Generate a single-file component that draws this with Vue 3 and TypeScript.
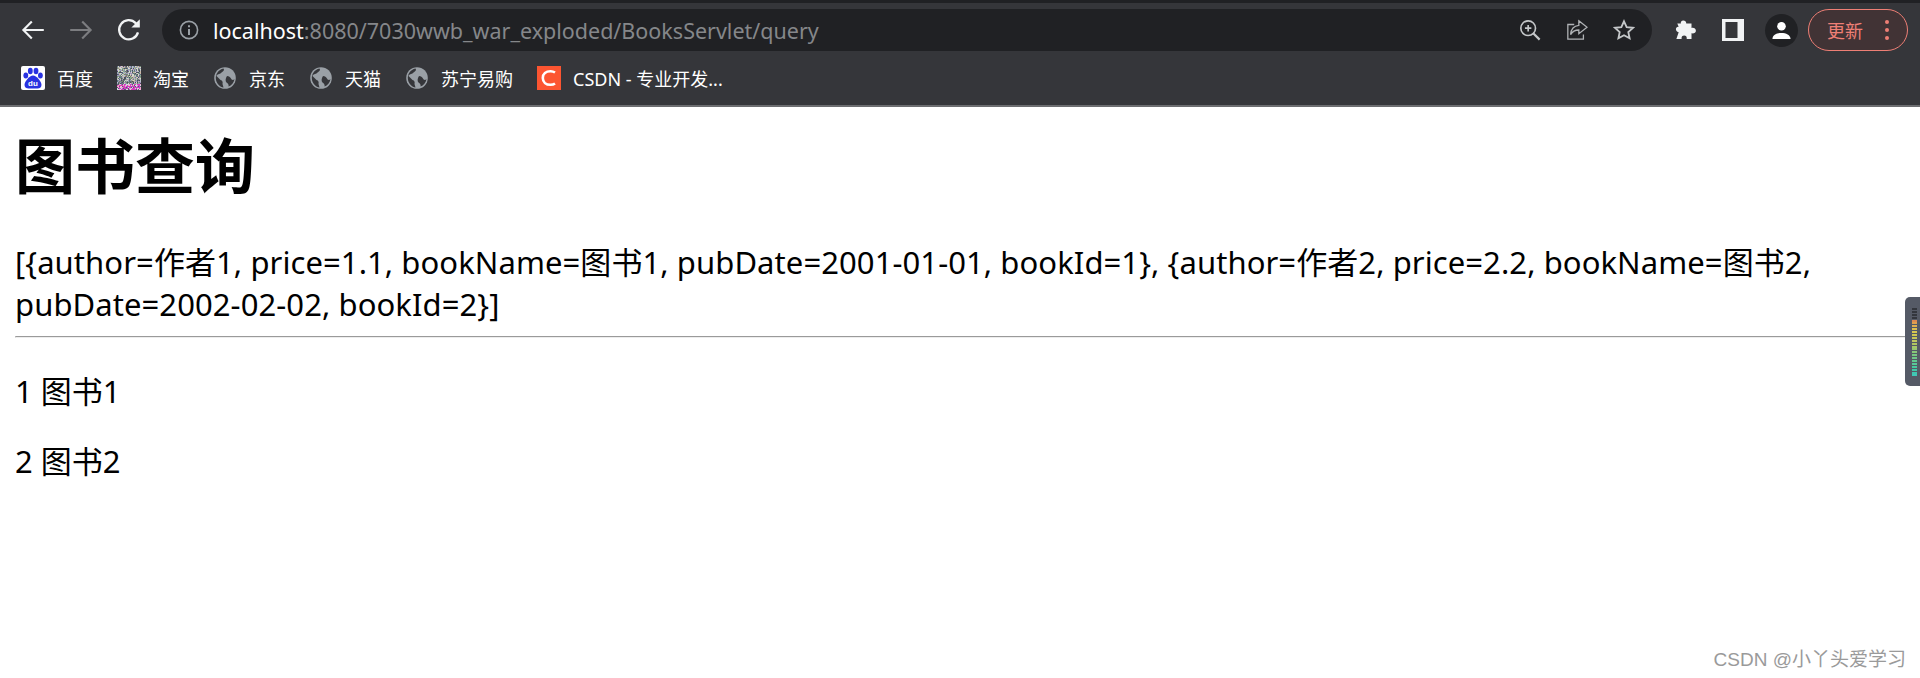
<script setup lang="ts">
const bookmarks = [
  { label: '百度', icon: 'baidu' },
  { label: '淘宝', icon: 'taobao' },
  { label: '京东', icon: 'globe' },
  { label: '天猫', icon: 'globe' },
  { label: '苏宁易购', icon: 'globe' },
  { label: 'CSDN - 专业开发...', icon: 'csdn' },
]
const palette = ['#9aa0b8', '#c9b7a8', '#6f8a7c', '#b8c0c8', '#5d6a80', '#d8d8c8', '#a890c0', '#88a890', '#7a7a70', '#4a5060']
const hot = ['#e040b0', '#c040d0', '#f0a0d0', '#5a6070', '#d8d8e0']
let seed = 17
const rnd = () => {
  seed = (seed * 1103 + 12345) % 65536
  return seed / 65536
}
const noise = Array.from({ length: 576 }, (_, i) => {
  const y = Math.floor(i / 24)
  const set = y > 17 ? hot : palette
  return { x: i % 24, y, fill: set[Math.floor(rnd() * set.length)] }
})
const meter = ['#e08a50', '#e0a050', '#e0b050', '#e0c050', '#d8c850', '#d0c850', '#c8c858', '#c0c860', '#b0c860', '#a8c868', '#98c870', '#88c878', '#78c880', '#70c888', '#60c890', '#58c898', '#48c8a0', '#40c8a8', '#40c8b0', '#40c8b8']
</script>

<template>
  <div class="page">
    <header class="chrome">
      <div class="tabstrip"></div>
      <div class="toolbar">
        <div class="nav">
          <svg class="nav-ic" viewBox="2 2 20 20" fill="none" stroke="#f1f3f4" stroke-width="1.8"><path d="M21 12H4M11 5l-7 7 7 7" /></svg>
          <svg class="nav-ic" viewBox="2 2 20 20" fill="none" stroke="#7c7d80" stroke-width="1.8"><path d="M3 12h17M13 5l7 7-7 7" /></svg>
          <svg class="nav-ic" viewBox="2 2 20 20" fill="none" stroke="#f1f3f4" stroke-width="1.9"><path d="M19.500 14a8 8 0 1 1-1.900-7.700L20 8.600" /><path d="M21 3v7h-7z" fill="#f1f3f4" stroke="none" /></svg>
        </div>
        <div class="omnibox">
          <svg class="info" viewBox="0 0 20 20" fill="none" stroke="#9aa0a6" stroke-width="1.600"><circle cx="10" cy="10" r="8.600" /><path d="M10 9v6M10 5.200v2" stroke-width="2" /></svg>
          <div class="url"><span class="host">localhost</span>:8080/7030wwb_war_exploded/BooksServlet/query</div>
          <div class="omni-actions">
            <svg class="ic" viewBox="0 0 24 24" fill="none" stroke="#c4c7c9" stroke-width="1.800"><circle cx="10" cy="10" r="8" /><path d="M15.500 15.500l7 7" stroke-width="2.400" /><path d="M10 6.500v7M6.500 10h7" /></svg>
            <svg class="ic" viewBox="0 0 24 24" fill="none" stroke="#b0b3b6" stroke-width="1.400"><path d="M9 6H2v16h17v-5" /><path d="M14 2l9 7-9 7v-4c-4 0-7 1.500-9 5 .5-6 3.500-9.500 9-10z" /></svg>
            <svg class="ic" viewBox="0 0 24 24" fill="none" stroke="#c4c7c9" stroke-width="2"><path d="M12 2.500l2.900 6.300 6.900.8-5.100 4.700 1.400 6.800-6.100-3.400-6.100 3.400 1.400-6.800-5.100-4.700 6.900-.8z" /></svg>
          </div>
        </div>
        <div class="tools">
          <svg class="ic puzzle" viewBox="0 0 24 24" fill="#f1f3f4"><path d="M9 1.500c2 0 3.300 1.400 3.300 3.300h5.700v5c2.500-.6 4.800.7 4.800 2.900s-2.300 3.400-4.800 2.900v6.100h-5.200c.4-2.300-1-3.600-2.800-3.600s-3.200 1.300-2.800 3.600H1.500l2.500-7.200C1.800 14 1 12.500 1 11s1.200-2.700 3-2.500L2.500 4.800h3.900C6 3 7 1.500 9 1.500z" /></svg>
          <svg class="ic side" viewBox="0 0 22 22"><rect width="22" height="22" fill="#f1f3f4" /><rect x="3.500" y="3" width="12" height="16" fill="#35363a" /></svg>
          <div class="avatar">
            <svg viewBox="0 0 22 22" fill="#fff" width="21" height="21"><circle cx="11" cy="6.500" r="4.500" /><path d="M1.500 20c0-4.500 5-6.500 9.500-6.500s9.500 2 9.500 6.500z" /></svg>
          </div>
          <div class="update">
            <span>更新</span>
            <i class="dots"><b></b><b></b><b></b></i>
          </div>
        </div>
      </div>
      <div class="bookmarks">
        <div v-for="b in bookmarks" :key="b.label" class="bm">
          <svg v-if="b.icon === 'baidu'" class="fav" viewBox="0 0 24 24">
            <rect width="24" height="24" rx="2" fill="#fff" />
            <g fill="#2932e1">
              <ellipse cx="4.800" cy="9.500" rx="2.400" ry="3" />
              <ellipse cx="9.300" cy="5" rx="2.400" ry="3.200" />
              <ellipse cx="15" cy="5" rx="2.400" ry="3.200" />
              <ellipse cx="19.400" cy="9.500" rx="2.400" ry="3" />
              <path d="M12 9.500c3.500 0 8.500 6 8.500 9.500 0 2.500-2 3.500-4 3.500H7.500c-2 0-4-1-4-3.500 0-3.500 5-9.500 8.500-9.500z" />
            </g>
            <text x="12" y="20" text-anchor="middle" class="du">du</text>
          </svg>
          <svg v-else-if="b.icon === 'taobao'" class="fav" viewBox="0 0 24 24" shape-rendering="crispEdges">
            <rect v-for="(n, i) in noise" :key="i" :x="n.x" :y="n.y" width="1" height="1" :fill="n.fill" />
          </svg>
          <svg v-else-if="b.icon === 'globe'" class="fav" viewBox="0 0 24 24">
            <circle cx="12" cy="12" r="10.800" fill="#9aa0a6" />
            <path d="M10.500 2.500c1.500 2-1 3-2.500 4.500S4 8 3.500 10l4 4c2 .5 2.500 2 2 4l1 3.500C7 21 4 18 3 14 2 8 5.500 3.500 10.500 2.500zM14 10c2 0 3 1 4 2.500 1 2 2.500 1.500 3.500 .5-.5 3.500-3 6.500-6 7.500.5-2-.5-3-2-4-1.500-1.500-1-4.500 .5-6.500z" fill="#35363a" />
          </svg>
          <svg v-else class="fav" viewBox="0 0 24 24">
            <rect width="24" height="24" fill="#fc5531" />
            <path d="M18 6.500a8 8 0 0 0-4.500-1.300C9 5.200 5.800 8 5.800 12s3.200 6.800 7.700 6.800c1.800 0 3.300-.4 4.500-1.300" fill="none" stroke="#fff" stroke-width="2.600" />
          </svg>
          <span class="bm-label">{{ b.label }}</span>
        </div>
      </div>
    </header>

    <main class="content">
      <h1>图书查询</h1>
      <p class="raw">[{author=作者1, price=1.1, bookName=图书1, pubDate=2001-01-01, bookId=1}, {author=作者2, price=2.2, bookName=图书2, pubDate=2002-02-02, bookId=2}]</p>
      <hr />
      <p class="row">1 图书1</p>
      <p class="row">2 图书2</p>
    </main>

    <aside class="widget">
      <i v-for="n in 4" :key="'d' + n" class="off"></i>
      <i v-for="(c, i) in meter" :key="i" :style="{ background: c }"></i>
    </aside>
    <div class="mark">CSDN @小丫头爱学习</div>
  </div>
</template>

<style scoped>
.page {
  position: relative;
  width: 1920px;
  height: 678px;
  overflow: hidden;
  background: #fff;
  color: #000;
  font-family: "Noto Sans", "Noto Sans CJK SC", sans-serif;
}
.chrome {
  background: #35363a;
  border-bottom: 2px solid #6c6d70;
}
.tabstrip {
  height: 3px;
  background: #202124;
}
.toolbar {
  height: 42px;
  margin-top: 6px;
  display: flex;
  align-items: center;
}
.nav {
  width: 162px;
  padding-left: 21px;
  box-sizing: border-box;
  display: flex;
  gap: 24px;
  flex: none;
}
.nav-ic {
  width: 24px;
  height: 24px;
  flex: none;
}
.ic {
  width: 22px;
  height: 22px;
  flex: none;
}
.omnibox {
  width: 1490px;
  height: 42px;
  flex: none;
  border-radius: 21px;
  background: #202124;
  display: flex;
  align-items: center;
  padding-left: 17px;
  box-sizing: border-box;
}
.info {
  width: 20px;
  height: 20px;
  flex: none;
}
.url {
  margin-left: 14px;
  font-size: 21.500px;
  color: #85878a;
  white-space: nowrap;
}
.host {
  color: #fff;
}
.omni-actions {
  margin-left: auto;
  margin-right: 17px;
  display: flex;
  gap: 25px;
}
.tools {
  display: flex;
  align-items: center;
  margin-left: 23px;
}
.side {
  margin-left: 25px;
}
.avatar {
  margin-left: 21px;
  width: 33px;
  height: 33px;
  border-radius: 50%;
  background: #202124;
  display: flex;
  align-items: center;
  justify-content: center;
}
.update {
  margin-left: 10px;
  width: 100px;
  height: 42px;
  box-sizing: border-box;
  border: 1.500px solid #ee7f75;
  border-radius: 21px;
  background: #413335;
  color: #ee7f75;
  font-size: 18px;
  display: flex;
  align-items: center;
  padding-left: 18px;
}
.dots {
  margin-left: 22px;
  display: flex;
  flex-direction: column;
  gap: 4px;
}
.dots b {
  width: 4px;
  height: 4px;
  border-radius: 50%;
  background: #ee7f75;
}
.bookmarks {
  height: 54px;
  padding-left: 21px;
  display: flex;
  align-items: center;
  gap: 24px;
  box-sizing: border-box;
}
.bm {
  display: flex;
  align-items: center;
  gap: 12px;
}
.fav {
  width: 24px;
  height: 24px;
  flex: none;
}
.du {
  font: bold 8px "Liberation Sans", sans-serif;
  fill: #fff;
}
.bm-label {
  color: #fff;
  font-size: 18px;
  white-space: nowrap;
}
.content {
  padding: 0 0 0 15px;
}
h1 {
  margin: 16px 0 0;
  font-size: 60px;
  line-height: 80px;
  font-weight: 700;
  font-family: "Noto Sans CJK SC", sans-serif;
}
.raw {
  margin: 38px 0 0;
  font-size: 31px;
  line-height: 42px;
  letter-spacing: 0.080px;
}
hr {
  margin: 11px 0 32px;
  border: 0;
  border-top: 1px solid #9a9a9a;
  border-left: 1px solid #cfcfcf;
  border-bottom: 1px solid #ededed;
}
.row {
  margin: 28px 0 0;
  font-size: 31px;
  line-height: 42px;
}
.widget {
  position: absolute;
  right: 0;
  top: 297px;
  width: 15px;
  height: 89px;
  box-sizing: border-box;
  padding: 11px 3px 0 7px;
  background: #555a66;
  border-radius: 5px 0 0 5px;
  display: flex;
  flex-direction: column;
  gap: 0.900px;
}
.widget i {
  display: block;
  height: 2px;
  flex: none;
}
.widget .off {
  background: #33363d;
}
.mark {
  position: absolute;
  right: 14px;
  bottom: 7px;
  font: 19px "Liberation Sans", "Noto Sans CJK SC", sans-serif;
  color: #9a9a9a;
}
</style>
